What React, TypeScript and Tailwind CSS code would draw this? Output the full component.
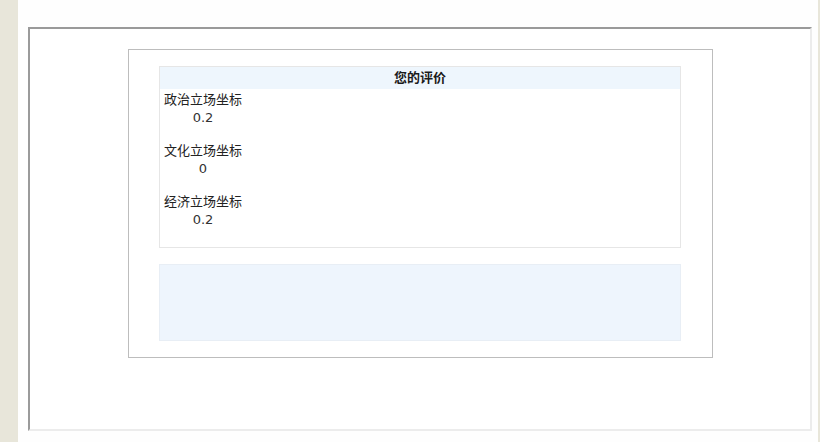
import React from 'react';

const rows = [
  { label: '政治立场坐标', value: '0.2' },
  { label: '文化立场坐标', value: '0' },
  { label: '经济立场坐标', value: '0.2' },
];

const App: React.FC = () => {
  return (
    <div
      className="flex h-[442px] w-[820px] bg-[#e8e6da] text-[13px] text-[#222]"
      style={{ fontFamily: '"DejaVu Sans", "Noto Sans CJK SC", sans-serif' }}
    >
      <div className="ml-[18px] w-[800px] bg-[#fefefe] pl-[10px] pt-[27px]">
        <div className="h-[404px] w-[784px] border-2 border-t-[#9a9a9a] border-l-[#9a9a9a] border-r-[#ececec] border-b-[#ececec] bg-white pl-[98px] pt-[20px]">
          <div className="flex h-[309px] w-[585px] flex-col gap-[16px] border border-[#bdbdbd] px-[30px] pt-[16px]">
            {/* evaluation table */}
            <div className="h-[182px] w-[522px] border border-[#e6e6e6]">
              <div className="flex h-[22px] items-center justify-center bg-[#eef6fd] font-bold text-[#1a1a1a]">
                您的评价
              </div>
              <div className="flex flex-col gap-[15px] pl-[4px] pt-[2px]">
                {rows.map((r) => (
                  <div key={r.label} className="flex w-fit flex-col items-center">
                    <span className="leading-[18px]">{r.label}</span>
                    <span className="leading-[18px] text-[#333]">{r.value}</span>
                  </div>
                ))}
              </div>
            </div>
            <div className="h-[77px] w-[522px] border border-[#e8eef5] bg-[#eef5fd]" />
          </div>
        </div>
      </div>
    </div>
  );
};

export default App;
